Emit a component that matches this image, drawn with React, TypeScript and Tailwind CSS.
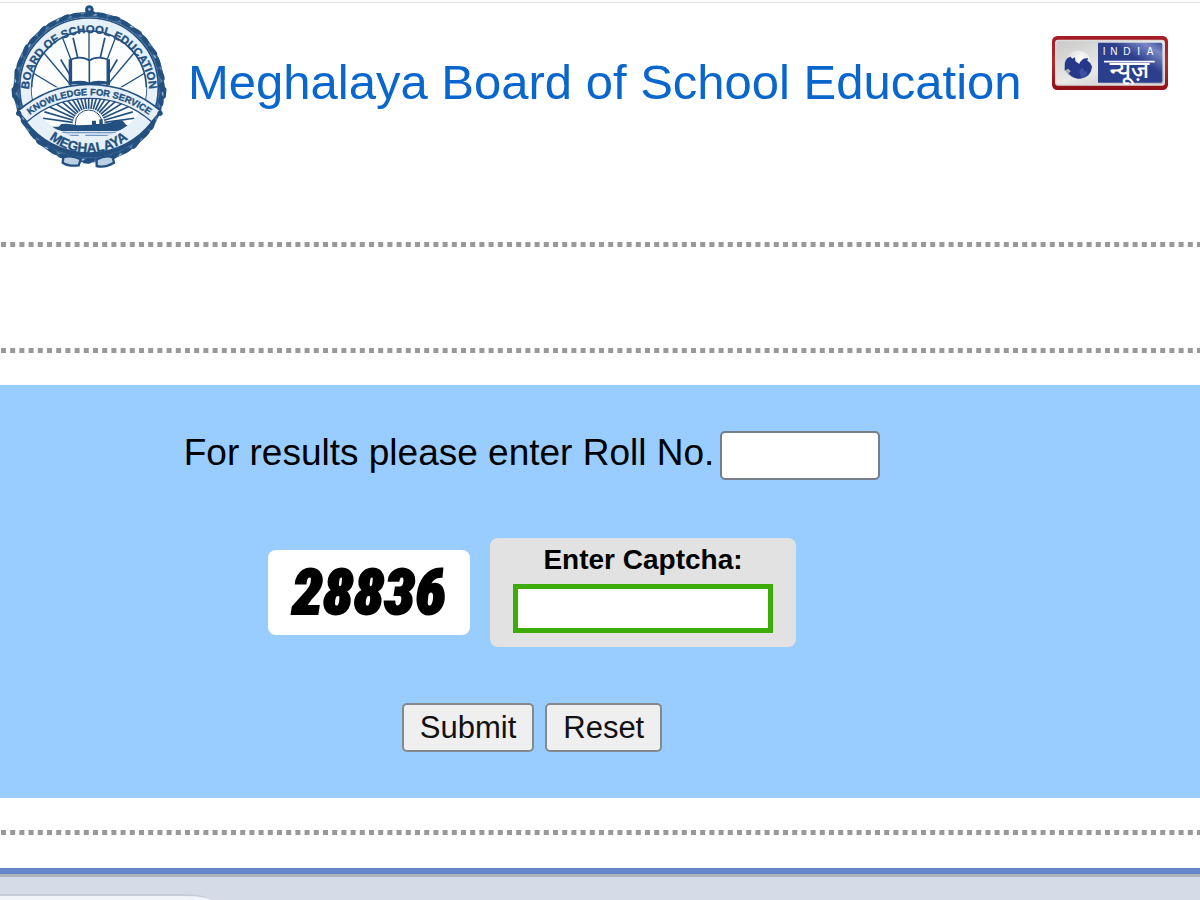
import type { ReactNode } from 'react'

const INK = '#24507f'

const point = (cx: number, cy: number, r: number, deg: number) => {
  const rad = (deg * Math.PI) / 180
  return { x: cx + r * Math.cos(rad), y: cy + r * Math.sin(rad) }
}

type RayProps = {
  cx: number
  cy: number
  from: number
  to: number
  deg: number
  width: number
}

function Ray({ cx, cy, from, to, deg, width }: RayProps) {
  const a = point(cx, cy, from, deg)
  const b = point(cx, cy, to, deg)
  return <line x1={a.x} y1={a.y} x2={b.x} y2={b.y} stroke={INK} strokeWidth={width} />
}

const leaves = Array.from({ length: 36 }, (_, i) => i * 10)
const sunRays = Array.from({ length: 21 }, (_, i) => 188 + i * 8.2)

function BoardEmblem() {
  return (
    <svg
      viewBox="0 9 540 525"
      className="h-[175px] w-[180px] shrink-0"
      role="img"
      aria-label="Board of School Education Meghalaya"
    >
      <defs>
        <path id="ring-top" d="M86 280 A181 181 0 1 1 448 280" />
        <path id="ring-bottom" d="M76 268 A190 190 0 0 0 456 268" />
        <path id="motto" d="M76 356 A297 297 0 0 1 460 356" />
        <clipPath id="inner">
          <circle cx="267" cy="265" r="172" />
        </clipPath>
      </defs>

      {/* wreath */}
      <circle cx="267" cy="262" r="218" fill="none" stroke="#3a6797" strokeWidth="16" />
      {leaves.map((deg, i) => {
        const p = point(267, 262, 220, deg)
        return (
          <ellipse
            key={deg}
            cx={p.x}
            cy={p.y}
            rx="19"
            ry="7"
            fill={INK}
            transform={`rotate(${deg + (i % 2 ? 74 : 94)} ${p.x} ${p.y})`}
          />
        )
      })}
      {leaves.map((deg, i) => {
        const p = point(267, 262, i % 2 ? 218 : 222, deg + 5)
        return (
          <ellipse
            key={deg}
            cx={p.x}
            cy={p.y}
            rx="6"
            ry="2"
            fill={i % 3 ? '#5f88b1' : '#9dbbd8'}
            transform={`rotate(${deg + 80} ${p.x} ${p.y})`}
          />
        )
      })}
      <circle cx="268" cy="29" r="13" fill={INK} />
      <circle cx="268" cy="28" r="4" fill="#9dbbd8" />
      <path
        d="M190 472 q25 -8 52 6 l-6 18 q-30 4 -48 -8z M290 478 q28 -14 48 -6 l4 16 q-26 16 -52 10z"
        fill="#b9d0e5"
        stroke={INK}
        strokeWidth="7"
      />
      <circle cx="266" cy="482" r="9" fill={INK} />

      <circle cx="267" cy="262" r="208" fill="#e6f0f9" stroke={INK} strokeWidth="5" />
      <circle cx="267" cy="265" r="172" fill="#fbfdff" stroke={INK} strokeWidth="5" />

      <g clipPath="url(#inner)">
        {[211, 230, 249, 270, 291, 310, 329].map((deg) => (
          <Ray key={deg} cx={267} cy={320} from={40} to={260} deg={deg} width={4} />
        ))}
        {[239, 257, 283, 301].map((deg) => (
          <Ray key={deg} cx={267} cy={320} from={80} to={deg === 257 || deg === 283 ? 212 : 165} deg={deg} width={5} />
        ))}

        {/* open book */}
        <path
          d="M214 178 Q246 166 268 182 Q290 166 322 178 L322 248 Q290 240 268 250 Q246 240 214 248Z"
          fill="#fff"
          stroke={INK}
          strokeWidth="5"
        />
        <path d="M210 178 V250 Q246 244 268 254 Q290 244 326 250 V178" fill="none" stroke={INK} strokeWidth="8" />
        <path d="M268 182 V250" stroke={INK} strokeWidth="5" />

        {/* sunrise over the hills */}
        <rect x="90" y="262" width="354" height="180" fill="#fbfdff" />
        {sunRays.map((deg, i) => (
          <Ray key={deg} cx={266} cy={374} from={48} to={i > 5 && i < 15 ? 100 : 138} deg={deg} width={5} />
        ))}
        <circle cx="266" cy="370" r="40" fill="#fff" stroke={INK} strokeWidth="3" />
        <path
          d="M130 380 H176 L184 372 Q210 370 232 376 L276 374 V362 H288 V372 H298 V358 H308 V372 L330 368 Q350 358 368 362 L378 374 L400 382 L374 386 L350 394 H188 L160 386Z"
          fill={INK}
        />
        <path d="M200 394 H340 V416 H200Z" fill="#e6f0f9" />
        <path
          d="M160 398 H378 M180 406 H236 M256 406 H350"
          stroke="#6f97bf"
          strokeWidth="4"
        />
      </g>

      {/* lower scroll */}
      <path d="M94 356 A212 212 0 0 0 440 356" fill="none" stroke={INK} strokeWidth="51" />
      <path d="M97 352 A214 214 0 0 0 437 352" fill="none" stroke="#e6f0f9" strokeWidth="42" />

      {/* motto ribbon */}
      <path
        d="M61 308 L40 290 L38 268 L50 252 L60 262 M474 308 L494 290 L496 268 L484 252 L474 262"
        fill="none"
        stroke={INK}
        strokeWidth="7"
      />
      <path d="M66 350 A306 306 0 0 1 470 350" fill="none" stroke={INK} strokeWidth="47" />
      <path d="M69 348 A306 306 0 0 1 467 348" fill="none" stroke="#e6f0f9" strokeWidth="38" />
      <circle cx="56" cy="340" r="8" fill={INK} />
      <circle cx="480" cy="340" r="8" fill={INK} />

      <g
        fill={INK}
        stroke={INK}
        strokeWidth="1"
        textAnchor="middle"
        className="font-['Liberation_Sans',Arial,sans-serif] font-bold"
      >
        <text fontSize="34">
          <textPath href="#ring-top" startOffset="50%">
            BOARD OF SCHOOL EDUCATION
          </textPath>
        </text>
        <text fontSize="28">
          <textPath href="#motto" startOffset="50%">
            KNOWLEDGE FOR SERVICE
          </textPath>
        </text>
        <text fontSize="41">
          <textPath href="#ring-bottom" startOffset="50%">
            MEGHALAYA
          </textPath>
        </text>
      </g>
    </svg>
  )
}

function IndiaNewsLogo() {
  return (
    <svg viewBox="0 0 348 162" className="h-[54px] w-[116px] shrink-0" role="img" aria-label="India News">
      <defs>
        <linearGradient id="frame" x1="0" y1="0" x2="0" y2="1">
          <stop offset="0" stopColor="#a51d22" />
          <stop offset="0.5" stopColor="#b32a2e" />
          <stop offset="1" stopColor="#8f0f14" />
        </linearGradient>
        <linearGradient id="silver" x1="0" y1="0" x2="1" y2="1">
          <stop offset="0" stopColor="#c9c9c9" />
          <stop offset="0.5" stopColor="#e9e9e7" />
          <stop offset="1" stopColor="#b9b9b9" />
        </linearGradient>
        <linearGradient id="navy" x1="0" y1="1" x2="1" y2="0">
          <stop offset="0" stopColor="#2b3f8c" />
          <stop offset="0.6" stopColor="#2c3f8d" />
          <stop offset="0.85" stopColor="#7886c4" />
          <stop offset="1" stopColor="#39509b" />
        </linearGradient>
        <radialGradient id="globe" cx="0.6" cy="0.3" r="0.7">
          <stop offset="0" stopColor="#fff" />
          <stop offset="0.7" stopColor="#dcdcde" />
          <stop offset="1" stopColor="#9c9ca6" />
        </radialGradient>
      </defs>
      <rect width="348" height="162" rx="16" fill="url(#frame)" />
      <rect x="9" y="11" width="330" height="138" rx="9" fill="#dcdcdc" />
      <rect x="13" y="16" width="322" height="128" rx="7" fill="url(#silver)" />
      <path d="M138 20 H326 Q331 20 331 26 V134 Q331 140 326 140 H138Z" fill="url(#navy)" />
      <circle cx="79" cy="86" r="42" fill="url(#globe)" />
      <path
        d="M39 80 Q43 64 55 62 L61 68 L69 64 L70 76 L82 84 L84 78 L94 68 L108 66 L106 74 L114 80 L120 92 Q116 126 79 128 Q60 126 50 112 L56 106 L48 98 L38 104Z"
        fill="#26388a"
      />
      <path d="M82 106 l8 -12 l7 12 l9 1 l-3 13 l-16 5z" fill="#3c51a4" />
      <text
        y="58"
        x="152 175 214 256 284"
        fontSize="30"
        fill="#fff"
        className="font-['Liberation_Sans',Arial,sans-serif]"
      >
        INDIA
      </text>
      <text
        x="232"
        y="125"
        fontSize="72"
        textAnchor="middle"
        fill="#fff"
        className="font-['Noto_Sans_Devanagari','Noto_Sans',sans-serif] font-medium"
      >
        न्यूज़
      </text>
      <path d="M156 77 H308" stroke="#fff" strokeWidth="5" />
    </svg>
  )
}

function DottedRule() {
  return (
    <svg className="block h-[5px] w-full" aria-hidden="true">
      <line x1="1" y1="2.5" x2="100%" y2="2.5" stroke="#999" strokeWidth="5" strokeDasharray="5 4.2" />
    </svg>
  )
}

type FormButtonProps = {
  type: 'submit' | 'reset'
  children: ReactNode
}

function FormButton({ type, children }: FormButtonProps) {
  return (
    <button
      type={type}
      className="h-[49px] rounded-[5px] border-2 border-[#85898e] bg-[#efefef] px-4 text-[31px] leading-none text-[#111]"
    >
      {children}
    </button>
  )
}

export default function App() {
  return (
    <div className="bg-white pt-[2px] font-['Liberation_Sans',Arial,sans-serif] text-black">
      <header className="flex items-start border-t border-[#e4e4e4] pr-8">
        <BoardEmblem />
        <h1 className="mt-[51px] ml-2 text-[49px] leading-[56px] whitespace-nowrap text-[#0966cc]">
          Meghalaya Board of School Education
        </h1>
        <div className="mt-[33px] ml-auto">
          <IndiaNewsLogo />
        </div>
      </header>

      <div className="pt-16">
        <DottedRule />
      </div>
      <div className="pt-[101px] pb-8">
        <DottedRule />
      </div>

      <main className="bg-[#99ccff]">
        <form
          onSubmit={(e) => e.preventDefault()}
          className="flex flex-col items-center pt-[46px] pr-[136px] pb-[46px]"
        >
          <div className="flex items-start gap-[6px]">
            <label htmlFor="roll" className="text-[37px] leading-[44px] whitespace-nowrap">
              For results please enter Roll No.
            </label>
            <input
              id="roll"
              type="text"
              className="h-[49px] w-[160px] rounded-[5px] border-2 border-[#767f88] bg-white px-2 text-[28px] outline-none"
            />
          </div>

          <div className="mt-[58px] flex items-center gap-5">
            <div className="flex h-[85px] w-[202px] items-center justify-center rounded-lg bg-white">
              <span className="font-['Liberation_Sans_Narrow','Roboto_Condensed','Liberation_Sans',sans-serif] text-[62px] leading-none font-black italic [-webkit-text-stroke:2px_black]">
                28836
              </span>
            </div>
            <div className="flex w-[306px] flex-col items-center rounded-lg bg-[#e2e2e2] pt-[6px] pb-[14px]">
              <label htmlFor="captcha" className="text-[28px] leading-8 font-bold">
                Enter Captcha:
              </label>
              <input
                id="captcha"
                type="text"
                className="mt-2 h-[49px] w-[260px] border-[5px] border-[#3dab08] bg-white px-2 text-[28px] outline-none"
              />
            </div>
          </div>

          <div className="mt-14 flex gap-[11px]">
            <FormButton type="submit">Submit</FormButton>
            <FormButton type="reset">Reset</FormButton>
          </div>
        </form>
      </main>

      <div className="pt-8 pb-[33px]">
        <DottedRule />
      </div>

      <footer className="overflow-hidden border-t-[6px] border-[#6487cc] bg-[#d5dce8]">
        <div className="h-[3px] bg-[#adb5bd]" />
        <div className="mt-[17px] h-[6px] w-[210px] rounded-tr-[28px_6px] border-t-2 border-[#c6ccd8] bg-[#f1f4f8]" />
      </footer>
    </div>
  )
}
